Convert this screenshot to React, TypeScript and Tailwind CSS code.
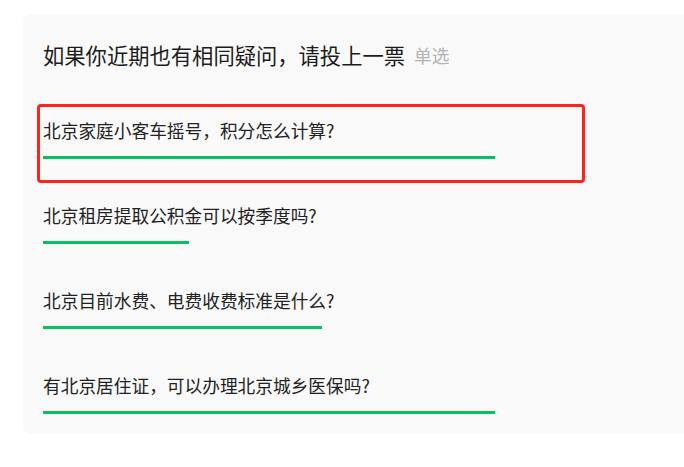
const options = [
  { text: "北京家庭小客车摇号，积分怎么计算?", bar: 452, marked: true },
  { text: "北京租房提取公积金可以按季度吗?", bar: 146 },
  { text: "北京目前水费、电费收费标准是什么?", bar: 279 },
  { text: "有北京居住证，可以办理北京城乡医保吗?", bar: 452 },
];

export default function App() {
  return (
    <div
      className="w-full h-[467px] overflow-hidden bg-white pt-[14px] pl-[23px]"
      style={{ fontFamily: '"Microsoft YaHei", "Noto Sans CJK SC", sans-serif' }}
    >
      <div className="w-[720px] rounded-lg bg-[#f9f9f9] pt-[26px] pb-[20px] pl-[20px]">
        <div className="flex items-center h-[30px] text-[21.3px] text-[#1c1c1c]">
          <span>如果你近期也有相同疑问，请投上一票</span>
          <span className="ml-[9px] text-[17.7px] text-[#b3b3b3]">单选</span>
        </div>

        <ul className="mt-[47px] flex flex-col gap-[43px]">
          {options.map((o) => (
            <li key={o.text} className="relative">
              <div className="h-[26px] flex items-center text-[17.7px] text-[#222]">
                {o.text}
              </div>
              <div
                className="mt-[13px] h-[3px] bg-[#07c160]"
                style={{ width: o.bar }}
              />
              {o.marked && (
                <div className="absolute -top-[13px] -left-[6px] w-[548px] h-[79px] rounded-[4px] border-[3px] border-[#fe2419]" />
              )}
            </li>
          ))}
        </ul>
      </div>
    </div>
  );
}
